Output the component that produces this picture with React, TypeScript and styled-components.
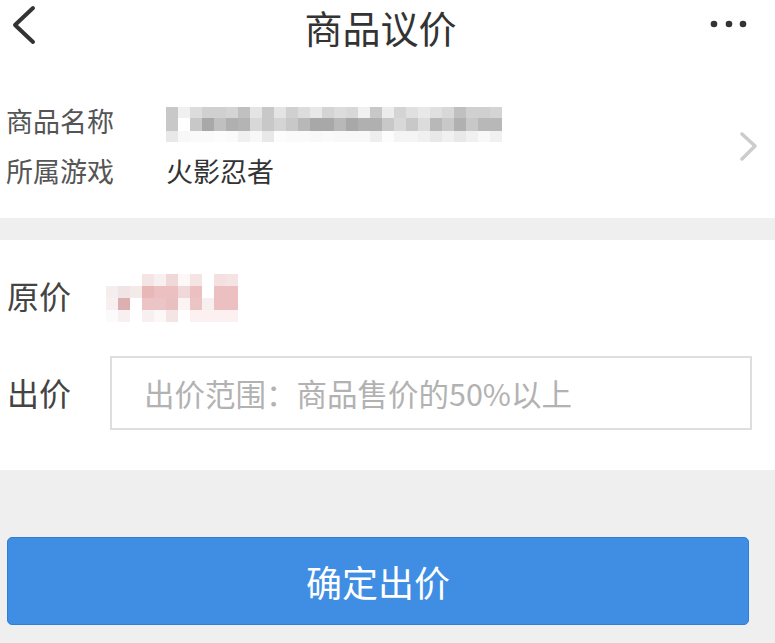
import React from "react";
import styled, { createGlobalStyle } from "styled-components";

const Global = createGlobalStyle`
  html, body { margin: 0; padding: 0; background: #efefef; }
  body { font-family: "Noto Sans CJK SC", "Noto Sans", sans-serif; }
  * { box-sizing: border-box; }
`;

const Page = styled.div`
  width: 775px;
  min-height: 643px;
  background: #efefef;
  display: flex;
  flex-direction: column;
  overflow: hidden;
`;

const Header = styled.header`
  height: 56px;
  background: #fff;
  display: grid;
  grid-template-columns: 56px 1fr 70px;
  align-items: start;
`;

const Title = styled.h1`
  margin: 0;
  text-align: center;
  font-size: 38px;
  font-weight: 400;
  color: #333;
  line-height: 54px;
`;

const IconSlot = styled.div`
  display: flex;
  align-items: center;
  justify-content: flex-start;
  height: 56px;
`;

const InfoSection = styled.section`
  background: #fff;
  padding: 40px 17px 22px 6px;
  display: flex;
  align-items: center;
`;

const InfoRows = styled.div`
  flex: 1;
  display: flex;
  flex-direction: column;
`;

const InfoRow = styled.div`
  height: 50px;
  display: grid;
  grid-template-columns: 160px 1fr;
  align-items: center;
`;

const InfoLabel = styled.span`
  font-size: 27px;
  color: #555;
  line-height: 1.2;
`;

const InfoValue = styled.span`
  font-size: 27px;
  color: #333;
  line-height: 1.2;
  display: flex;
  align-items: center;
`;

const Spacer = styled.div`
  height: 22px;
  background: #efefef;
`;

const PriceSection = styled.section`
  background: #fff;
  padding: 30px 23px 40px 6px;
  display: flex;
  flex-direction: column;
  gap: 30px;
`;

const PriceRow = styled.div<{ $h: number }>`
  height: ${(p) => p.$h}px;
  display: grid;
  grid-template-columns: 100px 1fr;
  align-items: center;
`;

const PriceLabel = styled.span<{ $shift?: number }>`
  font-size: 32px;
  color: #444;
  line-height: 1.2;
  padding-left: 1px;
  margin-top: ${(p) => p.$shift ?? 0}px;
`;

const BidInput = styled.input`
  height: 74px;
  width: calc(100% - 4px);
  margin-left: 4px;
  border: 2px solid #dedede;
  border-radius: 0;
  padding: 0 0 0 32px;
  font-family: "Noto Sans CJK SC", "Noto Sans", sans-serif;
  font-size: 30.5px;
  color: #333;
  outline: none;
  background: #fff;
  &::placeholder { color: #b2b2b2; }
`;

const ButtonArea = styled.div`
  padding: 67px 26px 0 7px;
`;

const SubmitButton = styled.button`
  width: 100%;
  height: 88px;
  background: #3f8ee3;
  border: 1px solid #2f7fd8;
  border-radius: 5px;
  color: #fff;
  font-family: "Noto Sans CJK SC", "Noto Sans", sans-serif;
  font-size: 36px;
  font-weight: 400;
  display: flex;
  align-items: center;
  justify-content: center;
  padding: 0;
  cursor: pointer;
`;

const nameCols: [string, string, string][] = [
  ["#c8c8c8", "#c8c8c8", "#e8e8e8"],
  ["#f0f0f0", "#ffffff", "#f8f8f8"],
  ["#dcdcdc", "#c8c8c8", "#fafafa"],
  ["#d0d0d0", "#a8a8a8", "#fafafa"],
  ["#d0d0d0", "#c0c0c0", "#fcfcfc"],
  ["#d4d4d4", "#b0b0b0", "#fafafa"],
  ["#c0c0c0", "#b4b4b4", "#f0f0f0"],
  ["#e4e4e4", "#d8d8d8", "#f8f8f8"],
  ["#c8c8c8", "#c8c8c8", "#e8e8e8"],
  ["#e4e4e4", "#d4d4d4", "#fcfcfc"],
  ["#d0d0d0", "#c8c8c8", "#fafafa"],
  ["#dcdcdc", "#b8b8b8", "#fafafa"],
  ["#e8e8e8", "#a8a8a8", "#f8f8f8"],
  ["#d4d4d4", "#a8a8a8", "#fafafa"],
  ["#dcdcdc", "#b8b8b8", "#f8f8f8"],
  ["#d8d8d8", "#a8a8a8", "#f8f8f8"],
  ["#f0f0f0", "#b0b0b0", "#f8f8f8"],
  ["#c8c8c8", "#b0b0b0", "#eeeeee"],
  ["#ececec", "#c8c8c8", "#fcfcfc"],
  ["#d4d4d4", "#d8d8d8", "#f4f4f4"],
  ["#e0e0e0", "#c8c8c8", "#f4f4f4"],
  ["#e8e8e8", "#dcdcdc", "#f0f0f0"],
  ["#e0e0e0", "#b8b8b8", "#e8e8e8"],
  ["#d8d8d8", "#c8c8c8", "#f0f0f0"],
  ["#c0c0c0", "#b0b0b0", "#e8e8e8"],
  ["#d0d0d0", "#c8c8c8", "#f0f0f0"],
  ["#d0d0d0", "#b8b8b8", "#f8f8f8"],
  ["#d4d4d4", "#b8b8b8", "#f0f0f0"],
];

const priceRows: string[][] = [
  ["#ffffff", "#ffffff", "#ffffff", "#f4e4e4", "#f8f0f0", "#f0d8d8", "#fcf8f8", "#f4e4e4", "#ffffff", "#f4e0e0", "#f4e4e4"],
  ["#f4eeee", "#f0e4e4", "#f4eaea", "#e8b8b8", "#ecc0c0", "#ecc0c0", "#f0d8d8", "#ecc0c0", "#ffffff", "#ecc0c0", "#ecc0c0"],
  ["#f8f0f0", "#dcb0b0", "#ffffff", "#ecc4c4", "#ecc4c8", "#e8c0c0", "#fcf4f4", "#ecc4c4", "#f8f0f0", "#ecc0c0", "#ecc0c0"],
  ["#fcfafa", "#f8f0f0", "#ffffff", "#f8f0f0", "#fcf8f8", "#f4e4e4", "#ffffff", "#fcf0f0", "#fcf0f0", "#fcf0f0", "#fcf0f0"],
];

const NameMosaic = () => {
  const rowY = [0, 11, 24];
  const rowH = [11, 13, 11];
  return (
    <svg width={336} height={35} viewBox="0 0 336 35" style={{ display: "block", marginTop: 7 }}>
      {nameCols.map((col, i) =>
        col.map((c, r) => (
          <rect key={`${i}-${r}`} x={i * 12} y={rowY[r]} width={12} height={rowH[r]} fill={c} />
        ))
      )}
    </svg>
  );
};

const PriceMosaic = () => (
  <svg width={132} height={48} viewBox="0 0 132 48" style={{ display: "block" }}>
    {priceRows.map((row, r) =>
      row.map((c, i) => <rect key={`${r}-${i}`} x={i * 12} y={r * 12} width={12} height={12} fill={c} />)
    )}
  </svg>
);

export default function App() {
  return (
    <Page>
      <Global />
      <Header>
        <IconSlot>
          <svg width="40" height="56" viewBox="0 0 40 56" style={{ display: "block" }}>
            <polyline points="33,8 15,25 33,42" fill="none" stroke="#333" strokeWidth="4" strokeLinecap="round" strokeLinejoin="round" />
          </svg>
        </IconSlot>
        <Title>商品议价</Title>
        <IconSlot>
          <svg width="50" height="56" viewBox="0 0 50 56" style={{ display: "block" }}>
            <circle cx="9" cy="24" r="3.3" fill="#333" />
            <circle cx="24" cy="24" r="3.3" fill="#333" />
            <circle cx="38" cy="24" r="3.3" fill="#333" />
          </svg>
        </IconSlot>
      </Header>

      <InfoSection>
        <InfoRows>
          <InfoRow>
            <InfoLabel>商品名称</InfoLabel>
            <InfoValue>
              <NameMosaic />
            </InfoValue>
          </InfoRow>
          <InfoRow>
            <InfoLabel>所属游戏</InfoLabel>
            <InfoValue>火影忍者</InfoValue>
          </InfoRow>
        </InfoRows>
        <svg width="18" height="32" viewBox="0 0 18 32" style={{ display: "block", marginTop: 2 }}>
          <polyline points="2,3 15,15 2,28" fill="none" stroke="#cccccc" strokeWidth="3.5" strokeLinecap="round" strokeLinejoin="round" />
        </svg>
      </InfoSection>

      <Spacer />

      <PriceSection>
        <PriceRow $h={56}>
          <PriceLabel $shift={-6}>原价</PriceLabel>
          <PriceMosaic />
        </PriceRow>
        <PriceRow $h={74}>
          <PriceLabel $shift={-2}>出价</PriceLabel>
          <BidInput placeholder="出价范围：商品售价的50%以上" />
        </PriceRow>
      </PriceSection>

      <ButtonArea>
        <SubmitButton>确定出价</SubmitButton>
      </ButtonArea>
    </Page>
  );
}
